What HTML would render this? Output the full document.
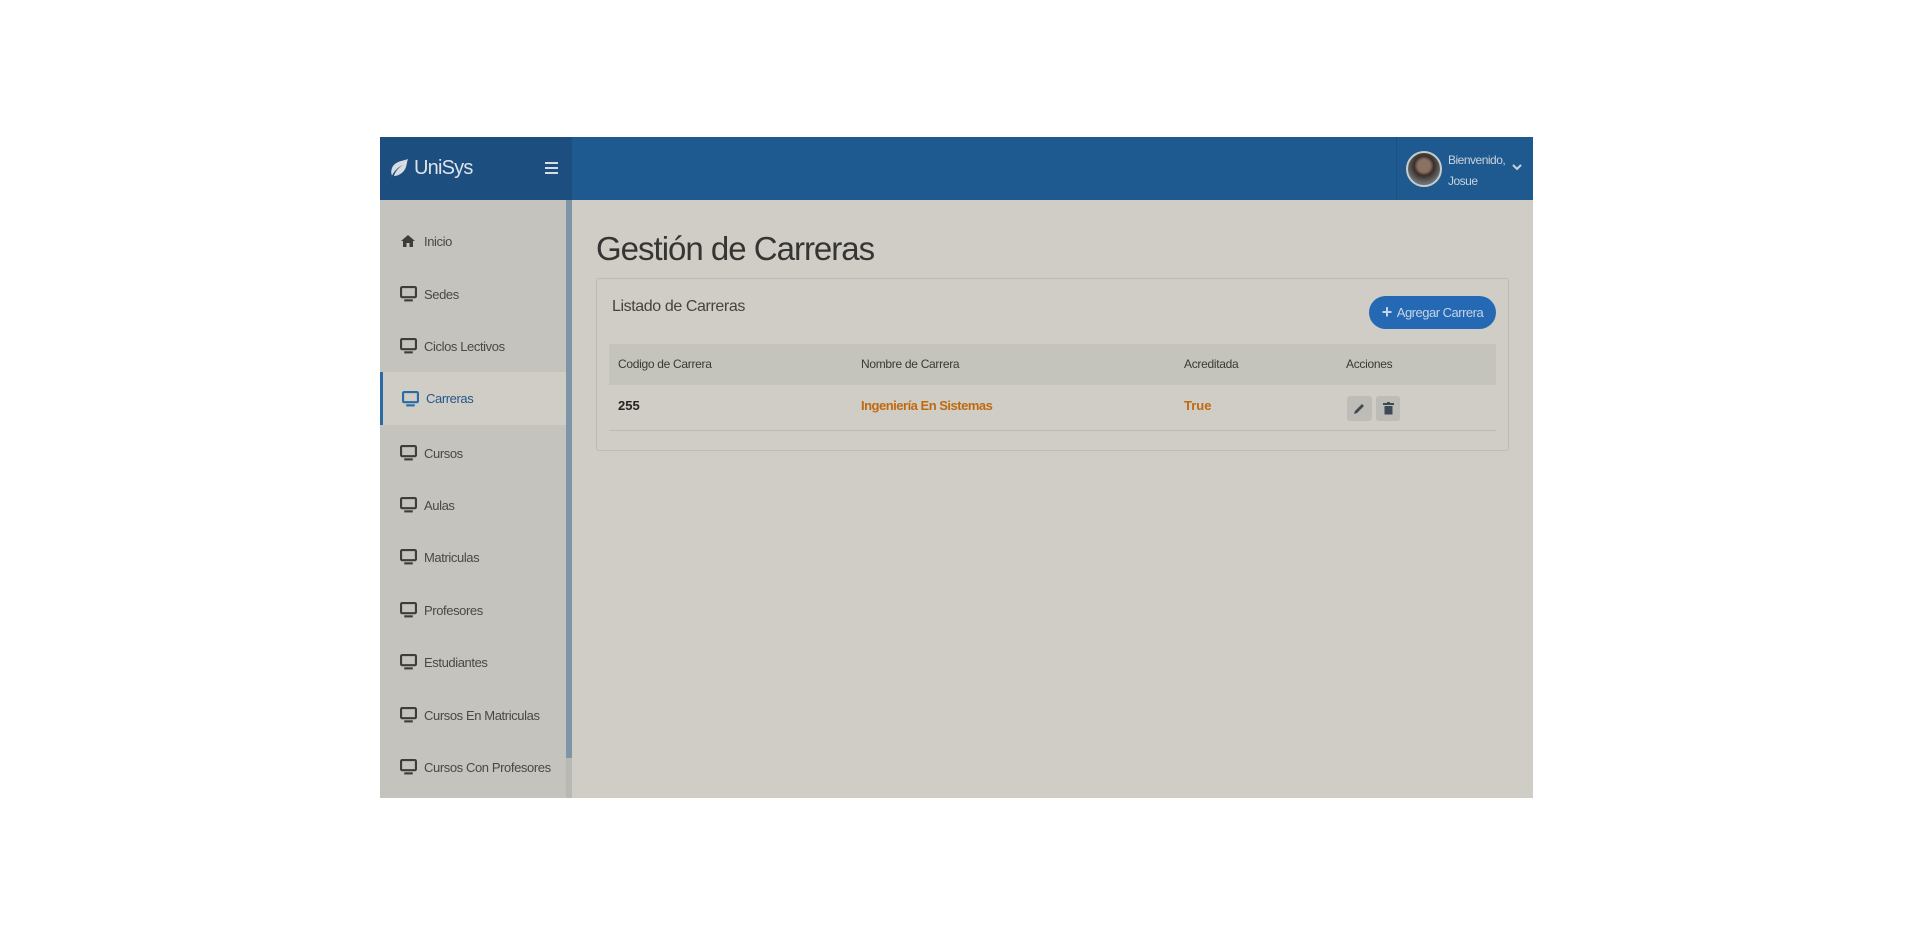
<!DOCTYPE html>
<html><head><meta charset="utf-8"><style>
*{margin:0;padding:0;box-sizing:border-box}
body{width:1920px;height:938px;background:#fff;font-family:"Liberation Sans",sans-serif;position:relative;overflow:hidden}
.a{position:absolute}
.nav{left:380px;top:200px;width:186px;height:598px;background:#c4c3bd}
.item{position:absolute;left:0;width:186px;height:52px;display:flex;align-items:center;font-size:13px;color:#4a4845;letter-spacing:-0.4px}
.item svg{position:absolute;left:20px}
.item span{position:absolute;left:44px}
.act{background:#cfcdc5;border-left:3px solid #2a6aa5;color:#24588a}
.act svg{left:19px}
.act span{left:43px}
</style></head><body>
<div class="a" style="left:380px;top:137px;width:1153px;height:63px;background:#1e5a8f"></div>
<div class="a" style="left:380px;top:137px;width:192px;height:63px;background:#1c4f80"></div>
<svg class="a" style="left:389px;top:158px" width="20" height="22" viewBox="0 0 20 22"><path d="M2 20 C4 14 9 9 14 7 C9 10 6 14 5 18 C9 18 15 15 17 9 C18 6 18 3 19 1 C14 3 6 3 3 10 C2 13 2 16 3 17 Z" fill="#d8dde3"/></svg>
<div class="a" style="left:414px;top:157px;font-size:20px;color:#dfe3e8;letter-spacing:-0.8px">UniSys</div>
<div class="a" style="left:545px;top:162px;width:13px;height:2px;background:#d8dde3;box-shadow:0 5px 0 #d8dde3,0 10px 0 #d8dde3"></div>
<div class="a" style="left:1396px;top:137px;width:1px;height:63px;background:#1a5080"></div>
<div class="a" style="left:1406px;top:151px;width:36px;height:36px;border-radius:50%;background:radial-gradient(circle at 50% 40%,#8a7262 0 25%,#3a2e28 40%,#6b7072 70%);border:2px solid #c8ccd0"></div>
<div class="a" style="left:1448px;top:150px;font-size:12px;color:#c9d3de;line-height:21px;letter-spacing:-0.5px">Bienvenido,<br>Josue</div>
<svg class="a" style="left:1512px;top:163px" width="10" height="8" viewBox="0 0 10 8"><path d="M1 2 L5 6 L9 2" stroke="#c9d3de" stroke-width="2" fill="none"/></svg>

<div class="a nav">
<div class="item" style="top:15px"><svg width="16" height="14" viewBox="0 0 16 14"><path d="M8 1 L1 7 L3 7 L3 13 L6.5 13 L6.5 9 L9.5 9 L9.5 13 L13 13 L13 7 L15 7 Z" fill="#3f3d3a"/></svg><span>Inicio</span></div>
<div class="item" style="top:68px"><svg width="17" height="16" viewBox="0 0 16 15"><rect x="1" y="1" width="14" height="9.5" rx="1" fill="none" stroke="#3f3d3a" stroke-width="2"/><rect x="4" y="12.5" width="8" height="2" fill="#3f3d3a"/></svg><span>Sedes</span></div>
<div class="item" style="top:120px"><svg width="17" height="16" viewBox="0 0 16 15"><rect x="1" y="1" width="14" height="9.5" rx="1" fill="none" stroke="#3f3d3a" stroke-width="2"/><rect x="4" y="12.5" width="8" height="2" fill="#3f3d3a"/></svg><span>Ciclos Lectivos</span></div>
<div class="item act" style="top:172px;height:53px"><svg width="17" height="16" viewBox="0 0 16 15"><rect x="1" y="1" width="14" height="9.5" rx="1" fill="none" stroke="#2a6aa5" stroke-width="2"/><rect x="4" y="12.5" width="8" height="2" fill="#2a6aa5"/></svg><span>Carreras</span></div>
<div class="item" style="top:227px"><svg width="17" height="16" viewBox="0 0 16 15"><rect x="1" y="1" width="14" height="9.5" rx="1" fill="none" stroke="#3f3d3a" stroke-width="2"/><rect x="4" y="12.5" width="8" height="2" fill="#3f3d3a"/></svg><span>Cursos</span></div>
<div class="item" style="top:279px"><svg width="17" height="16" viewBox="0 0 16 15"><rect x="1" y="1" width="14" height="9.5" rx="1" fill="none" stroke="#3f3d3a" stroke-width="2"/><rect x="4" y="12.5" width="8" height="2" fill="#3f3d3a"/></svg><span>Aulas</span></div>
<div class="item" style="top:331px"><svg width="17" height="16" viewBox="0 0 16 15"><rect x="1" y="1" width="14" height="9.5" rx="1" fill="none" stroke="#3f3d3a" stroke-width="2"/><rect x="4" y="12.5" width="8" height="2" fill="#3f3d3a"/></svg><span>Matriculas</span></div>
<div class="item" style="top:384px"><svg width="17" height="16" viewBox="0 0 16 15"><rect x="1" y="1" width="14" height="9.5" rx="1" fill="none" stroke="#3f3d3a" stroke-width="2"/><rect x="4" y="12.5" width="8" height="2" fill="#3f3d3a"/></svg><span>Profesores</span></div>
<div class="item" style="top:436px"><svg width="17" height="16" viewBox="0 0 16 15"><rect x="1" y="1" width="14" height="9.5" rx="1" fill="none" stroke="#3f3d3a" stroke-width="2"/><rect x="4" y="12.5" width="8" height="2" fill="#3f3d3a"/></svg><span>Estudiantes</span></div>
<div class="item" style="top:489px"><svg width="17" height="16" viewBox="0 0 16 15"><rect x="1" y="1" width="14" height="9.5" rx="1" fill="none" stroke="#3f3d3a" stroke-width="2"/><rect x="4" y="12.5" width="8" height="2" fill="#3f3d3a"/></svg><span>Cursos En Matriculas</span></div>
<div class="item" style="top:541px"><svg width="17" height="16" viewBox="0 0 16 15"><rect x="1" y="1" width="14" height="9.5" rx="1" fill="none" stroke="#3f3d3a" stroke-width="2"/><rect x="4" y="12.5" width="8" height="2" fill="#3f3d3a"/></svg><span>Cursos Con Profesores</span></div>
</div>
<div class="a" style="left:566px;top:200px;width:6px;height:598px;background:#b8b8b4"></div>
<div class="a" style="left:566px;top:200px;width:6px;height:558px;background:#7e95a8"></div>
<div class="a" style="left:572px;top:200px;width:961px;height:598px;background:#cfcdc5"></div>

<div class="a" style="left:596px;top:230px;font-size:33px;color:#363533;letter-spacing:-1px">Gestión de Carreras</div>
<div class="a" style="left:596px;top:278px;width:913px;height:173px;border:1px solid #bdbbb4;border-radius:3px;background:#cfcdc5"></div>
<div class="a" style="left:612px;top:298px;font-size:16px;color:#45443f;letter-spacing:-0.4px">Listado de Carreras</div>
<div class="a" style="left:1369px;top:296px;width:127px;height:33px;border-radius:17px;background:#2568b3;color:#c5d5e8;font-size:13px;display:flex;align-items:center;justify-content:center;letter-spacing:-0.5px"><b style="font-size:18px;margin-right:5px;font-weight:bold">+</b>Agregar Carrera</div>
<div class="a" style="left:609px;top:344px;width:887px;height:41px;background:#c4c3bc"></div>
<div class="a" style="left:609px;top:430px;width:887px;height:1px;background:#bdbbb4"></div>
<div class="a" style="top:357px;left:618px;font-size:12px;color:#3a3936;letter-spacing:-0.3px">Codigo de Carrera</div>
<div class="a" style="top:357px;left:861px;font-size:12px;color:#3a3936;letter-spacing:-0.3px">Nombre de Carrera</div>
<div class="a" style="top:357px;left:1184px;font-size:12px;color:#3a3936;letter-spacing:-0.3px">Acreditada</div>
<div class="a" style="top:357px;left:1346px;font-size:12px;color:#3a3936;letter-spacing:-0.3px">Acciones</div>
<div class="a" style="top:398px;left:618px;font-size:13px;color:#262523;font-weight:bold">255</div>
<div class="a" style="top:398px;left:861px;font-size:13px;color:#c06a10;font-weight:bold;letter-spacing:-0.5px">Ingeniería En Sistemas</div>
<div class="a" style="top:398px;left:1184px;font-size:13px;color:#c06a10;font-weight:bold">True</div>
<div class="a" style="left:1347px;top:396px;width:25px;height:25px;background:#bdbcb6;border-radius:3px"></div>
<div class="a" style="left:1376px;top:396px;width:24px;height:25px;background:#bdbcb6;border-radius:3px"></div>
<svg class="a" style="left:1353px;top:402px" width="13" height="13" viewBox="0 0 13 13"><path d="M1 12 L2 9 L9 2 L11 4 L4 11 Z" fill="#3d4a55"/></svg>
<svg class="a" style="left:1383px;top:402px" width="11" height="13" viewBox="0 0 11 13"><rect x="0" y="1" width="11" height="2" fill="#3d4a55"/><rect x="4" y="0" width="3" height="1.5" fill="#3d4a55"/><path d="M1.5 4 H9.5 V12.5 H1.5 Z" fill="#3d4a55"/></svg>
</body></html>
